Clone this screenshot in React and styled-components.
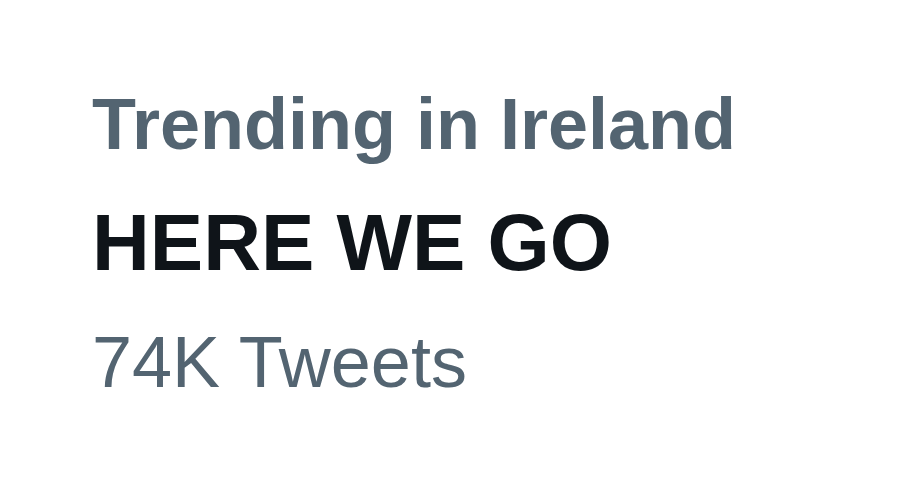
import React from "react";
import styled, { createGlobalStyle } from "styled-components";

const GlobalStyle = createGlobalStyle`
	html, body {
		margin: 0;
		padding: 0;
		background: #ffffff;
	}
	body {
		font-family: "Liberation Sans", Arial, sans-serif;
		-webkit-font-smoothing: antialiased;
	}
`;

const App = () => {
	return (
		<>
			<GlobalStyle />
			<Trend>
				<Context>Trending in Ireland</Context>
				<Topic>HERE WE GO</Topic>
				<Count>74K Tweets</Count>
			</Trend>
		</>
	);
};

export default App;

const Trend = styled.section`
	display: flex;
	flex-direction: column;
	gap: 28px;
	width: 897px;
	height: 488px;
	box-sizing: border-box;
	padding: 81px 0 0 92px;
	background: #ffffff;
	overflow: hidden;
`;

const Line = styled.div`
	margin: 0;
	line-height: 1.2;
	white-space: nowrap;
`;

const Context = styled(Line)`
	font-size: 72px;
	font-weight: 700;
	color: #536471;
`;

const Topic = styled(Line)`
	font-size: 80px;
	font-weight: 700;
	color: #0f1419;
`;

const Count = styled(Line)`
	font-size: 72px;
	font-weight: 400;
	color: #536471;
`;
